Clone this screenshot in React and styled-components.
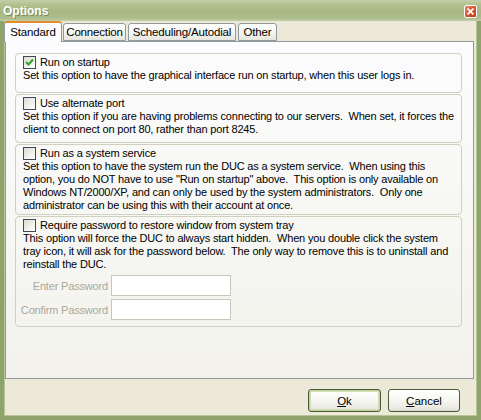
import styled, { createGlobalStyle } from "styled-components";

const GlobalStyle = createGlobalStyle`
  html, body {
    margin: 0;
    padding: 0;
    background: #ece9d8;
  }
  body {
    font-family: Tahoma, "Liberation Sans", Arial, sans-serif;
    font-size: 11px;
    letter-spacing: -0.17px;
    color: #000;
  }
`;

const Window = styled.div`
  width: 481px;
  height: 420px;
  box-sizing: border-box;
  display: flex;
  flex-direction: column;
  background: #ece9d8;
  border-left: 4px solid #8fa46a;
  border-right: 4px solid #8fa46a;
  border-bottom: 4px solid #8fa46a;
  box-shadow: inset 1px 0 0 #b5c596, inset -1px 0 0 #b5c596, inset 0 -1px 0 #b5c596;
`;

const TitleBar = styled.div`
  height: 21px;
  margin: 0 -4px;
  padding: 0 4px 0 3px;
  display: flex;
  align-items: center;
  justify-content: space-between;
  background: linear-gradient(
    to bottom,
    #c4cfa8 0%,
    #b0bf8c 25%,
    #a7b785 60%,
    #adbc8b 85%,
    #c2cda5 100%
  );
`;

const Title = styled.span`
  font-family: "Liberation Sans", Arial, sans-serif;
  font-weight: bold;
  font-size: 12px;
  letter-spacing: 0;
  color: #fff;
  text-shadow: 1px 1px 0 #7c8c5a;
  padding-top: 1px;
`;

const CloseButton = styled.div`
  width: 13px;
  height: 13px;
  margin-top: 1px;
  box-sizing: border-box;
  border: 1px solid #fff;
  border-radius: 2px;
  background: linear-gradient(to bottom right, #e8866b, #d24e2b 60%, #c0391a);
  display: flex;
  align-items: center;
  justify-content: center;
`;

const TabStrip = styled.div`
  display: flex;
  align-items: flex-end;
  height: 20px;
  gap: 2px;
  position: relative;
  z-index: 1;
`;

const Tab = styled.div`
  box-sizing: border-box;
  width: ${(p) => p.$w}px;
  height: ${(p) => (p.$active ? 21 : 18)}px;
  margin-bottom: ${(p) => (p.$active ? -1 : 0)}px;
  margin-right: ${(p) => (p.$active ? -1 : 0)}px;
  border: 1px solid #919b9c;
  border-bottom: ${(p) => (p.$active ? "none" : "1px solid #919b9c")};
  border-top: ${(p) => (p.$active ? "2px solid #e68b2c" : "1px solid #919b9c")};
  border-radius: 3px 3px 0 0;
  background: ${(p) =>
    p.$active
      ? "#fcfcfe"
      : "linear-gradient(to bottom, #ffffff, #f3f3ef 60%, #e6e5dd)"};
  display: flex;
  align-items: center;
  justify-content: center;
  font-size: 11.5px;
  padding-bottom: ${(p) => (p.$active ? 2 : 0)}px;
  white-space: nowrap;
`;

const Panel = styled.div`
  margin-left: 1px;
  margin-right: 3px;
  height: 338px;
  box-sizing: border-box;
  border: 1px solid #919b9c;
  background: linear-gradient(to bottom, #fcfcfe 0%, #f7f7f4 50%, #f3f2ec 100%);
  padding: 11px 11px 0 9px;
  display: flex;
  flex-direction: column;
  gap: 1px;
`;

const Group = styled.div`
  box-sizing: border-box;
  height: ${(p) => p.$h}px;
  border: 1px solid #d0d0bf;
  border-radius: 4px;
  padding: 2px 8px 0 7px;
  display: flex;
  flex-direction: column;
`;

const CheckRow = styled.label`
  display: flex;
  align-items: center;
  gap: 4px;
  height: 13px;
  line-height: 13px;
`;

const Box = styled.span`
  width: 13px;
  height: 13px;
  box-sizing: border-box;
  border: 1px solid #3d4a57;
  background: linear-gradient(to bottom right, #dcdcd4, #f6f6f2 70%, #ffffff);
  display: flex;
  align-items: center;
  justify-content: center;
`;

const Desc = styled.div`
  white-space: pre;
  line-height: 13px;
`;

const PasswordGrid = styled.div`
  display: grid;
  grid-template-columns: 85px 120px;
  column-gap: 3px;
  row-gap: 3px;
  margin-top: 4px;
  align-items: center;
`;

const FieldLabel = styled.span`
  color: #aca899;
  justify-self: end;
  white-space: nowrap;
`;

const Field = styled.input`
  box-sizing: border-box;
  width: 120px;
  height: 21px;
  border: 1px solid #c9c7ba;
  background: #fff;
  outline: none;
`;

const Footer = styled.div`
  flex: 1;
  display: flex;
  justify-content: flex-end;
  align-items: flex-start;
  gap: 7px;
  padding: 10px 17px 0 0;
`;

const Button = styled.button`
  box-sizing: border-box;
  width: ${(p) => p.$w}px;
  height: 23px;
  border: 1px solid #4a5a3a;
  border-radius: 3px;
  background: linear-gradient(to bottom, #ffffff, #f6f6f2 50%, #e8e7e0 90%, #d8d6cc);
  box-shadow: ${(p) =>
    p.$default ? "inset 0 0 0 1px #bfd09a, inset 0 0 0 2px #d4e0b6" : "none"};
  font-family: Tahoma, "Liberation Sans", Arial, sans-serif;
  font-size: 11.5px;
  color: #000;
  padding: 0;
  u {
    text-decoration: underline;
  }
`;

function Check({ checked }) {
  return (
    <Box>
      {checked && (
        <svg width="9" height="9" viewBox="0 0 9 9">
          <path d="M1 4 L3.5 6.5 L8 1.5" stroke="#2da12d" strokeWidth="2" fill="none" />
        </svg>
      )}
    </Box>
  );
}

const options = [
  {
    label: "Run on startup",
    checked: true,
    h: 40,
    lines: ["Set this option to have the graphical interface run on startup, when this user logs in."],
  },
  {
    label: "Use alternate port",
    h: 49,
    lines: [
      "Set this option if you are having problems connecting to our servers.  When set, it forces the",
      "client to connect on port 80, rather than port 8245.",
    ],
  },
  {
    label: "Run as a system service",
    h: 71,
    lines: [
      "Set this option to have the system run the DUC as a system service.  When using this",
      'option, you do NOT have to use "Run on startup" above.  This option is only available on',
      "Windows NT/2000/XP, and can only be used by the system administrators.  Only one",
      "administrator can be using this with their account at once.",
    ],
  },
];

export default function App() {
  return (
    <>
      <GlobalStyle />
      <Window>
        <TitleBar>
          <Title>Options</Title>
          <CloseButton>
            <svg width="7" height="7" viewBox="0 0 7 7">
              <path d="M0.5 0.5 L6.5 6.5 M6.5 0.5 L0.5 6.5" stroke="#fff" strokeWidth="1.6" />
            </svg>
          </CloseButton>
        </TitleBar>
        <TabStrip>
          <Tab $active $w={58}>Standard</Tab>
          <Tab $w={63}>Connection</Tab>
          <Tab $w={108}>Scheduling/Autodial</Tab>
          <Tab $w={39}>Other</Tab>
        </TabStrip>
        <Panel>
          {options.map((o) => (
            <Group key={o.label} $h={o.h}>
              <CheckRow>
                <Check checked={o.checked} />
                {o.label}
              </CheckRow>
              {o.lines.map((l) => (
                <Desc key={l}>{l}</Desc>
              ))}
            </Group>
          ))}
          <Group $h={111}>
            <CheckRow>
              <Check />
              Require password to restore window from system tray
            </CheckRow>
            <Desc>This option will force the DUC to always start hidden.  When you double click the system</Desc>
            <Desc>tray icon, it will ask for the password below.  The only way to remove this is to uninstall and</Desc>
            <Desc>reinstall the DUC.</Desc>
            <PasswordGrid>
              <FieldLabel>Enter Password</FieldLabel>
              <Field type="password" disabled />
              <FieldLabel>Confirm Password</FieldLabel>
              <Field type="password" disabled />
            </PasswordGrid>
          </Group>
        </Panel>
        <Footer>
          <Button $default $w={73}>
            <u>O</u>k
          </Button>
          <Button $w={72}>
            <u>C</u>ancel
          </Button>
        </Footer>
      </Window>
    </>
  );
}
